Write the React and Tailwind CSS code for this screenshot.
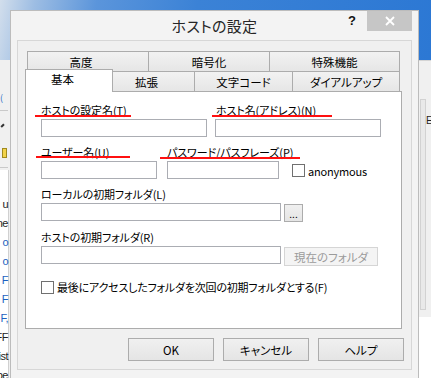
import React from "react";

// Windows 8 style dialog "ホストの設定" over a desktop

const jp = "font-['Noto_Sans_CJK_JP','Noto_Sans',sans-serif] [font-feature-settings:'palt']";

function BackTab({ w, label, pr, last }) {
  return (
    <div
      className={`${w} h-[20px] flex items-center justify-center border-t border-l border-[#acacac] bg-gradient-to-b from-[#f2f2f2] to-[#e6e6e6] ${last ? "border-r" : ""} ${pr}`}
    >
      <span className="text-[11.5px] leading-[14px] text-black">{label}</span>
    </div>
  );
}

function FrontTab({ w, label, pr }) {
  return (
    <div
      className={`${w} h-[20px] flex items-center justify-center border-t border-r border-[#acacac] bg-gradient-to-b from-[#f2f2f2] to-[#e6e6e6] ${pr}`}
    >
      <span className="text-[11.5px] leading-[14px] text-black">{label}</span>
    </div>
  );
}

function TextBox({ w }) {
  return <div className={`${w} h-[18px] border border-[#abadb3] bg-white`} />;
}

function CheckBox() {
  return <div className="w-[13px] h-[13px] border border-[#707070] bg-white shrink-0" />;
}

function Label({ children, className = "" }) {
  return (
    <div className={`h-[14px] text-[11px] leading-[14px] tracking-[-0.1px] text-black whitespace-nowrap ${className}`}>
      {children}
    </div>
  );
}

function PushButton({ children }) {
  return (
    <div className="w-[86px] h-[23px] flex items-center justify-center border border-[#acacac] bg-gradient-to-b from-[#f0f0f0] to-[#e5e5e5] text-[11.5px] leading-[14px] text-black">
      {children}
    </div>
  );
}

const listTails = [
  { t: "u", c: "text-[#222]" },
  { t: "ne", c: "text-[#222]" },
  { t: "o", c: "text-[#1c5fc0]" },
  { t: "o", c: "text-[#1c5fc0]" },
  { t: "F", c: "text-[#1c5fc0]" },
  { t: "F", c: "text-[#1c5fc0]" },
  { t: "F,", c: "text-[#1c5fc0]" },
  { t: "FF", c: "text-[#222]" },
  { t: "ist", c: "text-[#222]" },
  { t: "pe", c: "text-[#222]" },
];

export default function App() {
  return (
    <div className={`relative w-[431px] h-[378px] overflow-hidden bg-[#f0f0f0] ${jp}`}>
      {/* desktop sky */}
      <div className="h-[60px] bg-[linear-gradient(100deg,#d2deec_0%,#9dbde3_8%,#5b95db_22%,#3b82d6_45%,#2c78d4_100%)]" />

      {/* window behind, left edge */}
      <div className="absolute left-0 top-[93px] w-[8px] h-[10px] text-[9px] leading-[10px] text-[#2b6cc4]">(</div>
      <div className="absolute left-0 top-[110px] w-[8px] h-px bg-[#c9c9c9]" />
      <div className="absolute left-[2px] top-[124px] w-[4px] h-[6px] border-t-2 border-[#333] -rotate-45" />
      <div className="absolute left-[2px] top-[148px] w-[5px] h-[10px] bg-[#f2d34b] border border-[#a08a20]" />
      <div className="absolute left-0 top-[167px] w-[8px] h-px bg-[#c9c9c9]" />
      <div className="absolute left-0 top-[170px] w-[9px] h-[208px] bg-white border-r border-[#d0d0d0] flex flex-col items-end pt-[27px] gap-[5px]">
        {listTails.map((r, i) => (
          <div key={i} className={`h-[14px] text-[11px] leading-[14px] tracking-[-0.5px] whitespace-nowrap font-['Liberation_Sans_Narrow','Liberation_Sans',sans-serif] ${r.c}`}>
            {r.t}
          </div>
        ))}
      </div>

      {/* window behind, right edge */}
      <div className="absolute left-[418px] top-[60px] w-[13px] h-px bg-[#d4d4d4]" />
      <div className="absolute left-[420px] top-[99px] w-[6px] h-[211px] bg-[#e9e9e9] border border-[#d2d2d2]" />
      <div className="absolute left-[426px] top-[115px] text-[10px] leading-[12px] text-[#222] font-['Liberation_Sans',sans-serif]">E</div>
      <div className="absolute left-[418px] top-[317px] w-[13px] h-[61px] bg-white" />

      {/* dialog */}
      <div className="absolute left-[10px] top-[10px] w-[409px] h-[372px] border border-[#bcbcbc] bg-[#f3f3f3] flex flex-col">
        {/* title bar */}
        <div className="h-[29px] grid grid-cols-[1fr_auto_1fr]">
          <div />
          <div className="flex items-center text-[15px] leading-[18px] text-[#262626] tracking-[0.3px]">ホストの設定</div>
          <div className="flex justify-end items-start pr-[6px]">
            <div className="w-[30px] h-[20px] flex items-center justify-center text-[13px] font-bold text-[#111] font-['Liberation_Sans',sans-serif]">?</div>
            <div className="w-[45px] h-[20px] bg-[#c6c6c6] flex items-center justify-center">
              <svg width="10" height="10" viewBox="0 0 10 10">
                <path d="M1 1 L9 9 M9 1 L1 9" stroke="#fff" strokeWidth="1.8" />
              </svg>
            </div>
          </div>
        </div>

        {/* client area */}
        <div className="ml-[6px] w-[395px] h-[330px] border border-[#d7d7d7] bg-[#f0f0f0] flex flex-col">
          {/* back tab row */}
          <div className="mt-[10px] ml-[9px] flex">
            <BackTab w="w-[121px]" label="高度" pr="pr-[14px]" />
            <BackTab w="w-[121px]" label="暗号化" pr="" />
            <BackTab w="w-[131px]" label="特殊機能" pr="" last />
          </div>
          {/* front tab row */}
          <div className="-mt-[2px] ml-[7px] h-[22px] flex items-end">
            <div className="relative z-10 w-[88px] h-[23px] -mb-[1px] border-t border-l border-r border-[#acacac] bg-white flex justify-center pt-[2px] pr-[13px]">
              <span className="text-[11.5px] leading-[14px] text-black">基本</span>
            </div>
            <FrontTab w="w-[82px]" label="拡張" pr="pr-[14px]" />
            <FrontTab w="w-[98px]" label="文字コード" pr="" />
            <FrontTab w="w-[107px]" label="ダイアルアップ" pr="" />
          </div>

          {/* tab page */}
          <div className="ml-[7px] w-[377px] h-[238px] border border-[#acacac] bg-white pl-[15px] flex flex-col">
            <div className="mt-[11px] grid grid-cols-[166px_166px] gap-x-[8px]">
              <Label>ホストの設定名(T)</Label>
              <Label className="pl-[1px]">ホスト名(アドレス)(N)</Label>
            </div>
            <div className="mt-[2px] grid grid-cols-[166px_166px] gap-x-[8px]">
              <TextBox w="w-[166px]" />
              <TextBox w="w-[166px]" />
            </div>

            <div className="mt-[8px] flex">
              <Label className="w-[126px]">ユーザー名(U)</Label>
              <Label>パスワード/パスフレーズ(P)</Label>
            </div>
            <div className="mt-[2px] flex items-center">
              <TextBox w="w-[116px]" />
              <div className="ml-[10px]">
                <TextBox w="w-[112px]" />
              </div>
              <div className="ml-[13px] mt-[1px] flex items-center">
                <CheckBox />
                <span className="ml-[3px] text-[11px] leading-[14px] tracking-[-0.2px] text-black">anonymous</span>
              </div>
            </div>

            <Label className="mt-[8px]">ローカルの初期フォルダ(L)</Label>
            <div className="mt-[2px] flex items-start">
              <TextBox w="w-[240px]" />
              <div className="ml-[3px] mt-[1px] w-[19px] h-[18px] border border-[#acacac] bg-gradient-to-b from-[#f0f0f0] to-[#e5e5e5] flex items-end justify-center pb-[3px] text-[10px] leading-[8px] text-black">
                ...
              </div>
            </div>

            <Label className="mt-[8px]">ホストの初期フォルダ(R)</Label>
            <div className="mt-[2px] flex items-start">
              <TextBox w="w-[240px]" />
              <div className="ml-[3px] mt-[1px] w-[94px] h-[19px] border border-[#d5d5d5] bg-[#f4f4f4] flex items-center justify-center text-[11.5px] leading-[14px] text-[#9b9b9b]">
                現在のフォルダ
              </div>
            </div>

            <div className="mt-[14px] flex items-center">
              <CheckBox />
              <span className="ml-[3px] text-[11px] leading-[14px] tracking-[-0.2px] text-black whitespace-nowrap">
                最後にアクセスしたフォルダを次回の初期フォルダとする(F)
              </span>
            </div>
          </div>

          {/* dialog buttons */}
          <div className="mt-[9px] ml-[110px] flex gap-[9px]">
            <PushButton>OK</PushButton>
            <PushButton>キャンセル</PushButton>
            <PushButton>ヘルプ</PushButton>
          </div>
        </div>
      </div>

      {/* red annotation underlines */}
      <div className="absolute left-[35px] top-[115px] w-[96px] h-[2px] bg-[#ff1010]" />
      <div className="absolute left-[212px] top-[115px] w-[120px] h-[2px] bg-[#ff1010]" />
      <div className="absolute left-[36px] top-[156px] w-[94px] h-[2px] bg-[#ff1010]" />
      <div className="absolute left-[160px] top-[157px] w-[140px] h-[2px] bg-[#ff1010]" />
    </div>
  );
}
